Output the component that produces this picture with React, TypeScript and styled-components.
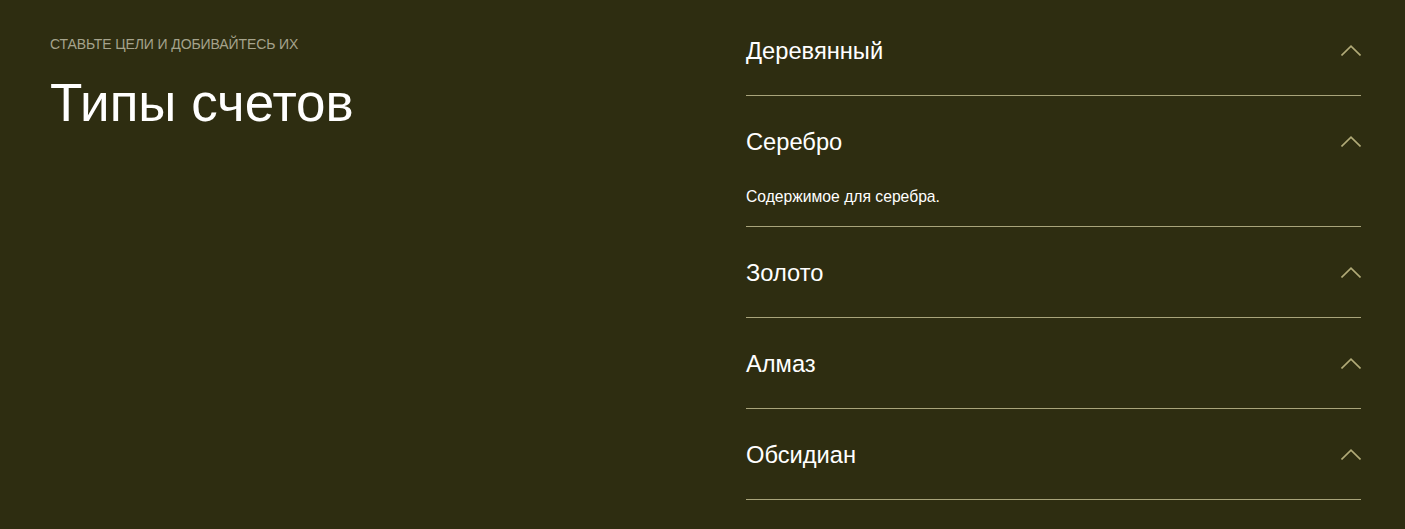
import React, { useState } from 'react';
import styled, { createGlobalStyle } from 'styled-components';

const GlobalStyle = createGlobalStyle`
  html, body {
    margin: 0;
    padding: 0;
    background: #2e2d11;
  }
  * {
    box-sizing: border-box;
  }
`;

type Item = {
  title: string;
  content: string;
};

const items: Item[] = [
  { title: 'Деревянный', content: 'Содержимое для деревянного.' },
  { title: 'Серебро', content: 'Содержимое для серебра.' },
  { title: 'Золото', content: 'Содержимое для золота.' },
  { title: 'Алмаз', content: 'Содержимое для алмаза.' },
  { title: 'Обсидиан', content: 'Содержимое для обсидиана.' },
];

const Chevron: React.FC = () => (
  <svg width="20" height="11" viewBox="0 0 20 11" fill="none">
    <polyline points="0.5,10.5 10,1.2 19.5,10.5" stroke="#b2ab78" strokeWidth="1.6" />
  </svg>
);

const App: React.FC = () => {
  const [open, setOpen] = useState<number | null>(1);

  return (
    <>
      <GlobalStyle />
      <Section>
        <Intro>
          <Eyebrow>СТАВЬТЕ ЦЕЛИ И ДОБИВАЙТЕСЬ ИХ</Eyebrow>
          <Title>Типы счетов</Title>
        </Intro>
        <Accordion>
          {items.map((item, i) => (
            <AccordionItem key={item.title}>
              <Header onClick={() => setOpen(open === i ? null : i)}>
                <HeaderTitle>{item.title}</HeaderTitle>
                <Chevron />
              </Header>
              {open === i && <Content>{item.content}</Content>}
            </AccordionItem>
          ))}
        </Accordion>
      </Section>
    </>
  );
};

const Section = styled.section`
  min-height: 100vh;
  background: #2e2d11;
  display: grid;
  grid-template-columns: 1fr 1fr;
  column-gap: 81px;
  padding: 5px 44px 0 50px;
  font-family: 'Liberation Sans', Arial, sans-serif;
  color: #ffffff;
`;

const Intro = styled.div`
  padding-top: 31px;
`;

const Eyebrow = styled.p`
  margin: 0;
  font-size: 14px;
  line-height: 16px;
  color: #a5a38c;
  letter-spacing: -0.1px;
`;

const Title = styled.h1`
  margin: 22px 0 0;
  font-size: 53px;
  line-height: 57px;
  font-weight: 400;
  letter-spacing: 0;
  color: #ffffff;
`;

const Accordion = styled.div`
  display: flex;
  flex-direction: column;
`;

const AccordionItem = styled.div`
  border-bottom: 1px solid #a9a47b;
`;

const Header = styled.div`
  height: 90px;
  display: flex;
  align-items: center;
  justify-content: space-between;
  cursor: pointer;
`;

const HeaderTitle = styled.span`
  font-size: 23.7px;
  line-height: 28px;
  padding-top: 1px;
  color: #ffffff;
`;

const Content = styled.div`
  font-size: 15.7px;
  line-height: 22px;
  padding-bottom: 18px;
  color: #ffffff;
`;

export default App;
